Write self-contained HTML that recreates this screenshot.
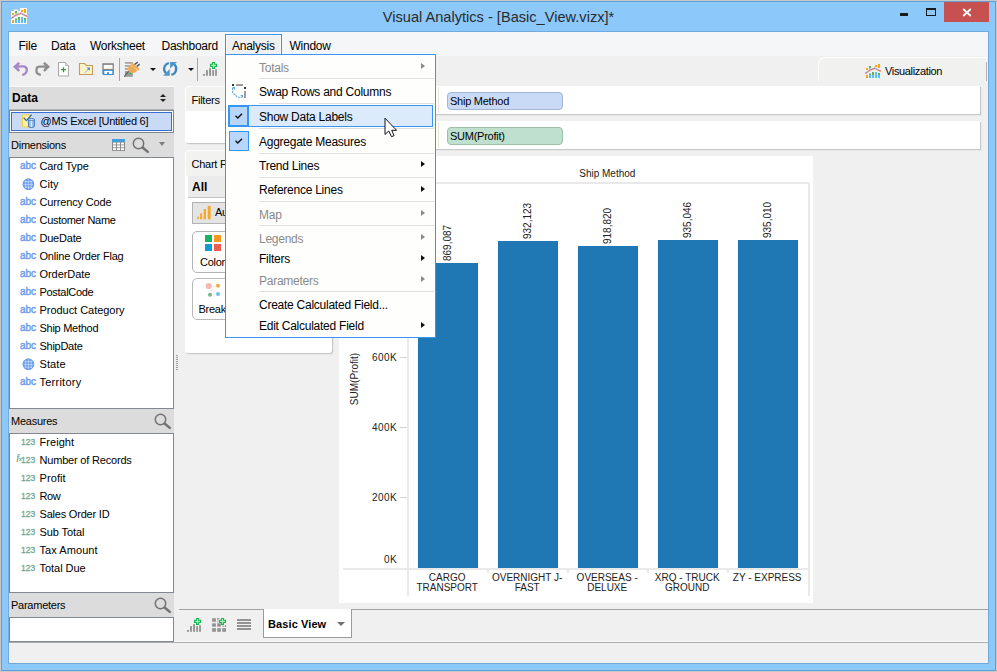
<!DOCTYPE html>
<html>
<head>
<meta charset="utf-8">
<title>Visual Analytics</title>
<style>
*{box-sizing:border-box;margin:0;padding:0}
html,body{width:997px;height:672px;overflow:hidden}
body{position:relative;background:#c9c9c9;font-family:"Liberation Sans",sans-serif;font-size:11px;color:#000}
.a{position:absolute}
.t{position:absolute;white-space:pre;line-height:14px;height:14px;letter-spacing:-0.25px}
.m{position:absolute;white-space:pre;font-size:12px;line-height:14px;height:14px;letter-spacing:-0.25px}
.c{position:absolute;white-space:pre;font-size:10px;line-height:10px;color:#222}
#f1{left:1px;top:1px;width:995px;height:670px;background:#629dd4}
#f2{left:2px;top:2px;width:993px;height:668px;background:#8dc8fb}
#f3{left:8px;top:31px;width:981px;height:633px;background:#71aade}
#cl{left:9px;top:32px;width:979px;height:631px;background:#f0f0f0;overflow:hidden}
.hd{background:#dcdcdc}
.lb{background:#fff;border:1px solid #828790}
.card{background:#fff;border-radius:5px 5px 3px 3px;box-shadow:1px 1px 0 #c8c8c8,2px 2px 0 #e8e8e8}
.sep{height:1px;background:#e2e2e2;left:34px;width:175px}
.dis{color:#8a8a8a}
.ic{color:#6f9fec;font-size:10px;letter-spacing:-0.1px;-webkit-text-stroke:0.45px #6f9fec}
.nm{color:#72a794;font-size:8.5px;letter-spacing:0;-webkit-text-stroke:0.3px #72a794}
.fx{color:#72a794;font-size:8.5px;font-style:italic;font-weight:700;font-family:"Liberation Serif",serif;letter-spacing:-0.6px}
.ar{width:0;height:0;border-left:4.4px solid #111;border-top:3.9px solid transparent;border-bottom:3.9px solid transparent}
.ar.g{border-left-color:#8a8a8a}
</style>
</head>
<body>
<div class="a" id="f1"></div>
<div class="a" id="f2"></div>

<!-- title bar -->
<svg class="a" style="left:11px;top:8px" width="16" height="16" viewBox="0 0 16 16">
<rect x="0" y="3" width="16" height="13" fill="#fbf8f1"/><rect x="3" y="1.5" width="4" height="3" fill="#fbf8f1"/><rect x="9" y="0" width="7" height="4" fill="#fbf8f1"/>
<rect x="1" y="5" width="2" height="2" fill="#f9a51a"/><rect x="4" y="3" width="2" height="2.5" fill="#64ae64"/><rect x="10" y="2" width="2" height="2" fill="#f9a51a"/><rect x="13" y="1" width="2" height="4" fill="#f9a51a"/>
<rect x="1" y="12" width="2" height="3" fill="#f9a51a"/><rect x="4" y="12" width="2" height="3" fill="#5bc0f8"/><rect x="7" y="12" width="2" height="3" fill="#5bc0f8"/><rect x="10" y="9" width="2" height="6" fill="#5bc0f8"/><rect x="13" y="12" width="2" height="3" fill="#5bc0f8"/>
<rect x="4" y="10.5" width="2" height="1.5" fill="#64ae64"/><rect x="7" y="9" width="2" height="3" fill="#64ae64"/><rect x="13" y="10" width="2" height="2" fill="#64ae64"/>
<path d="M0 10.5 L5 7.2 L10 5.2 L16 8.5" stroke="#a07ab8" stroke-width="1.4" fill="none"/><path d="M0 10.5 L5 7.2 L10 5.2 L16 8.5" stroke="#f4a07a" stroke-width="1.4" fill="none" stroke-dasharray="1.4 1.4"/>
</svg>
<div class="a" style="left:0;top:6.6px;width:997px;text-align:center;font-size:14.6px;line-height:20px;color:#2a2a2a;white-space:pre">Visual Analytics - [Basic_View.vizx]*</div>
<div class="a" style="left:900px;top:13px;width:8px;height:3px;background:#1a1a1a"></div>
<div class="a" style="left:926px;top:8px;width:10px;height:8px;border:1px solid #1a1a1a;border-top-width:2px"></div>
<div class="a" style="left:944px;top:2px;width:45px;height:20px;background:#c75050"></div>
<svg class="a" style="left:962px;top:8px" width="10" height="9" viewBox="0 0 10 9"><path d="M1.2 1 L8.8 8 M8.8 1 L1.2 8" stroke="#fff" stroke-width="1.7" fill="none"/></svg>

<div class="a" id="f3"></div>
<div class="a" id="cl">
<!-- coordinates inside #cl are offset by (-9,-32) -->
<div class="a" id="o" style="left:-9px;top:-32px;width:997px;height:672px">

<!-- menu bar -->
<div class="a" style="left:9px;top:32px;width:979px;height:24px;background:#f5f6f7"></div>
<div class="a" style="left:225px;top:34px;width:57px;height:21px;background:#f0f0f0;border:1px solid #3596f8;border-bottom:none;box-shadow:inset 1px 1px 0 #f8f8f8,inset -1px 0 0 #f8f8f8"></div>
<div class="m" style="left:18.5px;top:39px">File</div>
<div class="m" style="left:51px;top:39px">Data</div>
<div class="m" style="left:90px;top:39px">Worksheet</div>
<div class="m" style="left:161.5px;top:39px">Dashboard</div>
<div class="m" style="left:232px;top:39px">Analysis</div>
<div class="m" style="left:289.5px;top:39px">Window</div>

<!-- toolbar -->

<!-- undo -->
<svg class="a" style="left:12px;top:61px" width="17" height="16" viewBox="0 0 17 16"><path d="M1 5.8 L6.3 0.9 L8.1 2.5 L5.6 5.8 L8.1 9.5 L6.3 10.8 Z" fill="#a987c6"/><path d="M5 5.6 C9 5.2 14.8 4.4 14.8 8.9 C14.8 11.6 12.8 13.2 10.2 14" stroke="#a987c6" stroke-width="2.3" fill="none"/></svg>
<!-- redo -->
<svg class="a" style="left:34px;top:61px" width="17" height="16" viewBox="0 0 17 16"><path d="M16 5.8 L10.9 0.9 L9.1 2.5 L11.6 5.8 L9.1 9.5 L10.9 10.8 Z" fill="#8e8e8e"/><path d="M12 5.6 H5.6 C3.2 5.6 2.5 7 2.5 9 V10.6 C2.5 12.4 4 13.4 6.8 14" stroke="#8e8e8e" stroke-width="2.3" fill="none"/></svg>
<!-- new -->
<svg class="a" style="left:57px;top:62px" width="13" height="15" viewBox="0 0 13 15"><path d="M1.5 0.5 H8.5 L11.5 3.5 V14 H1.5 Z" fill="#fff" stroke="#a9a9a9"/><path d="M8.5 0.5 V3.5 H11.5" fill="#e6e6e6" stroke="#a9a9a9" stroke-width="0.8"/><path d="M6.5 5.2 V10.2 M4 7.7 H9" stroke="#2e9b3a" stroke-width="1.3"/></svg>
<!-- open -->
<svg class="a" style="left:78px;top:62px" width="16" height="14" viewBox="0 0 16 14"><path d="M1.5 1.5 H6.5 L8.5 3.5 H14.5 V12.5 H1.5 Z" fill="#fdf3c6" stroke="#c59a5c" stroke-width="1.1"/><path d="M7 10.5 L11 6.5" stroke="#3b8fd0" stroke-width="1" fill="none" stroke-dasharray="1.3 0.5"/><path d="M8.6 5.6 H11.9 V8.9 Z" fill="#3b8fd0"/></svg>
<!-- save -->
<svg class="a" style="left:101px;top:63px" width="14" height="13" viewBox="0 0 14 13"><rect x="1.3" y="0.2" width="11.6" height="7" fill="#858585"/><path d="M1.3 6.9 H12.9 V11.9 H2.3 L1.3 10.9 Z" fill="#3f8fcb"/><rect x="2.7" y="1.9" width="8.9" height="4" fill="#fbfbfb"/><rect x="3.3" y="7.9" width="8" height="3" fill="#fff"/><rect x="6" y="9.2" width="2" height="1.7" fill="#3f8fcb"/></svg>
<div class="a" style="left:119px;top:58px;width:1px;height:23px;background:#a5a5a5"></div>
<!-- plug -->
<svg class="a" style="left:124px;top:61px" width="17" height="17" viewBox="0 0 17 17"><g fill="#9c9c9c"><rect x="0.9" y="1.1" width="7.9" height="1.6"/><rect x="0.9" y="4.2" width="4.9" height="1.6"/><rect x="0.9" y="7.2" width="3.3" height="1.6"/><rect x="0.9" y="10.1" width="7.9" height="5.7"/></g><path d="M0.2 15.7 L4.8 10.2" stroke="#5a5e66" stroke-width="1.2"/><path d="M10.4 3.6 L13.7 1.1 M12.7 5.6 L15.6 3.1" stroke="#565a62" stroke-width="1.4"/><circle cx="8.2" cy="8" r="4.1" fill="#eeaa52"/><path d="M6 3.6 L13.4 9.8 L11 11.6 L4.6 6 Z" fill="#eeaa52"/><path d="M7.5 2.4 L14.5 8.2" stroke="#eeaa52" stroke-width="2" stroke-linecap="round"/><path d="M6.9 3.9 L13 9" stroke="#f7d3a0" stroke-width="0.7"/><rect x="5.9" y="11.8" width="1.3" height="1.3" fill="#1fc42e"/></svg>
<div class="a" style="left:150px;top:68px;width:0;height:0;border-left:3px solid transparent;border-right:3px solid transparent;border-top:3.5px solid #111"></div>
<!-- refresh -->
<svg class="a" style="left:162px;top:61px" width="17" height="16" viewBox="0 0 17 16"><g fill="none" stroke="#3c86be" stroke-width="2.2"><path d="M6.9 2 A6.05 6.05 0 0 0 4 12.3"/><path d="M9.3 13.75 A6.05 6.05 0 0 0 12.2 3.3"/></g><path d="M1.1 14.7 H7.8 V8.1 Z M15 1.1 H8.1 V7.5 Z" fill="#4f97cb"/></svg>
<div class="a" style="left:188px;top:68px;width:0;height:0;border-left:3px solid transparent;border-right:3px solid transparent;border-top:3.5px solid #111"></div>
<div class="a" style="left:197px;top:58px;width:1px;height:23px;background:#a5a5a5"></div>
<!-- add chart -->
<svg class="a" style="left:202px;top:61px" width="16" height="16" viewBox="0 0 16 16"><g fill="#939393"><rect x="1" y="12.9" width="1.9" height="1.9"/><rect x="4" y="9.1" width="1.9" height="5.7"/><rect x="7.1" y="7.2" width="1.9" height="7.6"/><rect x="10.2" y="9.1" width="1.8" height="5.7"/><rect x="13.1" y="8.3" width="1.8" height="6.5"/></g><path d="M11.55 0.9 V7.9 M8 4.4 H15.1" stroke="#12b450" stroke-width="3.1"/><path d="M11.55 2 V6.8 M9.1 4.4 H14" stroke="#a9f0b6" stroke-width="1.2"/></svg>


<!-- left panel -->
<div class="a hd" style="left:9px;top:86px;width:165px;height:24px;border-top:1px solid #fafafa;border-bottom:1px solid #b4b4b4"></div>
<div class="t" style="left:12px;top:91px;font-weight:700;font-size:12px;letter-spacing:0">Data</div>
<div class="a" style="left:160px;top:94px;width:0;height:0;border-left:3px solid transparent;border-right:3px solid transparent;border-bottom:3px solid #222"></div>
<div class="a" style="left:160px;top:99px;width:0;height:0;border-left:3px solid transparent;border-right:3px solid transparent;border-top:3px solid #222"></div>
<div class="a lb" style="left:9px;top:110px;width:165px;height:23px"></div>
<div class="a" style="left:11px;top:112px;width:161px;height:19px;background:#c8daf6;border:1px solid #3a6fd2"></div>
<svg class="a" style="left:22px;top:114px" width="13" height="14" viewBox="0 0 13 14"><rect x="0.5" y="0.8" width="7.5" height="12.2" rx="0.8" fill="#fdf3a8" stroke="#f5cf3e" stroke-width="1"/><path d="M1.6 3.6 L4.4 6.6 L9.6 0.6" stroke="#2f62b4" stroke-width="1.3" fill="none"/><path d="M6.4 5.4 C6.4 4.2 12.4 4.2 12.4 5.4 V12.4 C12.4 13.8 6.4 13.8 6.4 12.4 Z" fill="#8eb4e4" stroke="#3d72bc" stroke-width="0.9"/><ellipse cx="9.4" cy="5.5" rx="3" ry="1" fill="#cfe0f6" stroke="#3d72bc" stroke-width="0.7"/><rect x="8.6" y="7" width="1.6" height="5.8" fill="#dce9f8"/></svg>
<div class="t" style="left:40.5px;top:114px">@MS Excel [Untitled 6]</div>

<div class="a hd" style="left:9px;top:133px;width:165px;height:24px"></div>
<svg class="a" style="left:112px;top:139px" width="13" height="12" viewBox="0 0 13 12"><rect x="0" y="0" width="13" height="12" fill="#8c8c8c"/><rect x="0" y="0" width="13" height="3" fill="#3f9edc"/><g fill="#fff"><rect x="1" y="3.6" width="3" height="1.9"/><rect x="5" y="3.6" width="3" height="1.9"/><rect x="9" y="3.6" width="3" height="1.9"/><rect x="1" y="6.4" width="3" height="1.9"/><rect x="5" y="6.4" width="3" height="1.9"/><rect x="9" y="6.4" width="3" height="1.9"/><rect x="1" y="9.2" width="3" height="1.9"/><rect x="5" y="9.2" width="3" height="1.9"/><rect x="9" y="9.2" width="3" height="1.9"/></g></svg>
<svg class="a" style="left:132px;top:137px" width="18" height="17" viewBox="0 0 18 17"><circle cx="6.5" cy="6.5" r="5.2" fill="none" stroke="#727272" stroke-width="1.5"/><path d="M10.6 10.5 L15.8 14.9" stroke="#727272" stroke-width="2.4" stroke-linecap="round"/></svg>
<div class="a" style="left:158.6px;top:142px;width:0;height:0;border-left:3.8px solid transparent;border-right:3.8px solid transparent;border-top:4.2px solid #7c7c7c"></div>
<div class="t" style="left:11px;top:138px">Dimensions</div>
<div class="a lb" style="left:9px;top:157px;width:165px;height:252px"></div>
<div class="t ic" style="left:20px;top:159px">abc</div>
<div class="t" style="left:39.5px;top:159px;letter-spacing:-0.16px">Card Type</div>
<svg class="a" style="left:22px;top:177.6px" width="13" height="13" viewBox="0 0 13 13"><circle cx="6.4" cy="6.3" r="5.7" fill="#6a9df0"/><g stroke="#d3e3fb" stroke-width="0.65" fill="none"><path d="M0.5 6.4H12.3M1.5 3.6H11.3M1.5 9.2H11.3M6.4 0.5V12.3M3.6 1.4V11.4M9.2 1.4V11.4"/></g><circle cx="6.4" cy="6.3" r="5.3" fill="none" stroke="#6a9df0" stroke-width="1"/></svg>
<div class="t" style="left:39.5px;top:177px;letter-spacing:0.01px">City</div>
<div class="t ic" style="left:20px;top:195px">abc</div>
<div class="t" style="left:39.5px;top:195px;letter-spacing:-0.15px">Currency Code</div>
<div class="t ic" style="left:20px;top:213px">abc</div>
<div class="t" style="left:39.5px;top:213px;letter-spacing:-0.31px">Customer Name</div>
<div class="t ic" style="left:20px;top:231px">abc</div>
<div class="t" style="left:39.5px;top:231px;letter-spacing:-0.22px">DueDate</div>
<div class="t ic" style="left:20px;top:249px">abc</div>
<div class="t" style="left:39.5px;top:249px;letter-spacing:-0.20px">Online Order Flag</div>
<div class="t ic" style="left:20px;top:267px">abc</div>
<div class="t" style="left:39.5px;top:267px;letter-spacing:-0.07px">OrderDate</div>
<div class="t ic" style="left:20px;top:285px">abc</div>
<div class="t" style="left:39.5px;top:285px;letter-spacing:-0.30px">PostalCode</div>
<div class="t ic" style="left:20px;top:303px">abc</div>
<div class="t" style="left:39.5px;top:303px;letter-spacing:-0.04px">Product Category</div>
<div class="t ic" style="left:20px;top:321px">abc</div>
<div class="t" style="left:39.5px;top:321px;letter-spacing:-0.27px">Ship Method</div>
<div class="t ic" style="left:20px;top:339px">abc</div>
<div class="t" style="left:39.5px;top:339px;letter-spacing:-0.27px">ShipDate</div>
<svg class="a" style="left:22px;top:357.6px" width="13" height="13" viewBox="0 0 13 13"><circle cx="6.4" cy="6.3" r="5.7" fill="#6a9df0"/><g stroke="#d3e3fb" stroke-width="0.65" fill="none"><path d="M0.5 6.4H12.3M1.5 3.6H11.3M1.5 9.2H11.3M6.4 0.5V12.3M3.6 1.4V11.4M9.2 1.4V11.4"/></g><circle cx="6.4" cy="6.3" r="5.3" fill="none" stroke="#6a9df0" stroke-width="1"/></svg>
<div class="t" style="left:39.5px;top:357px;letter-spacing:0.10px">State</div>
<div class="t ic" style="left:20px;top:375px">abc</div>
<div class="t" style="left:39.5px;top:375px;letter-spacing:0.24px">Territory</div>

<div class="a hd" style="left:9px;top:409px;width:165px;height:24px"></div>
<svg class="a" style="left:154px;top:413px" width="18" height="17" viewBox="0 0 18 17"><circle cx="6.5" cy="6.5" r="5.2" fill="none" stroke="#727272" stroke-width="1.5"/><path d="M10.6 10.5 L15.8 14.9" stroke="#727272" stroke-width="2.4" stroke-linecap="round"/></svg>
<div class="t" style="left:11px;top:414px">Measures</div>
<div class="a lb" style="left:9px;top:433px;width:165px;height:160px"></div>
<div class="t nm" style="left:21px;top:435px">123</div>
<div class="t" style="left:39.5px;top:435px;letter-spacing:0.06px">Freight</div>
<div class="t fx" style="left:16.5px;top:450px">f<span style="font-size:6px;font-style:normal;font-family:'Liberation Sans',sans-serif;position:relative;top:1px">x</span></div>
<div class="t nm" style="left:21px;top:453px">123</div>
<div class="t" style="left:39.5px;top:453px;letter-spacing:-0.19px">Number of Records</div>
<div class="t nm" style="left:21px;top:471px">123</div>
<div class="t" style="left:39.5px;top:471px;letter-spacing:0.09px">Profit</div>
<div class="t nm" style="left:21px;top:489px">123</div>
<div class="t" style="left:39.5px;top:489px;letter-spacing:-0.45px">Row</div>
<div class="t nm" style="left:21px;top:507px">123</div>
<div class="t" style="left:39.5px;top:507px;letter-spacing:-0.20px">Sales Order ID</div>
<div class="t nm" style="left:21px;top:525px">123</div>
<div class="t" style="left:39.5px;top:525px;letter-spacing:-0.10px">Sub Total</div>
<div class="t nm" style="left:21px;top:543px">123</div>
<div class="t" style="left:39.5px;top:543px;letter-spacing:0.07px">Tax Amount</div>
<div class="t nm" style="left:21px;top:561px">123</div>
<div class="t" style="left:39.5px;top:561px;letter-spacing:-0.04px">Total Due</div>

<div class="a hd" style="left:9px;top:593px;width:165px;height:24px"></div>
<svg class="a" style="left:154px;top:597px" width="18" height="17" viewBox="0 0 18 17"><circle cx="6.5" cy="6.5" r="5.2" fill="none" stroke="#727272" stroke-width="1.5"/><path d="M10.6 10.5 L15.8 14.9" stroke="#727272" stroke-width="2.4" stroke-linecap="round"/></svg>
<div class="t" style="left:11px;top:598px">Parameters</div>
<div class="a lb" style="left:9px;top:617px;width:165px;height:25px"></div>


<!-- Visualization tab -->
<div class="a" style="left:818px;top:57px;width:170px;height:24px;background:#f1f1ef;border-top:1.5px solid #fff;border-left:1.5px solid #fff;border-top-left-radius:7px"></div>
<div class="a" style="left:986px;top:62px;width:1px;height:19px;background:#b4b4b4"></div>
<svg class="a" style="left:865px;top:63px" width="16" height="16" viewBox="0 0 16 16">
<rect x="1" y="5" width="2" height="2" fill="#f9a51a"/><rect x="4" y="3" width="2" height="2.5" fill="#64ae64"/><rect x="10" y="2" width="2" height="2" fill="#f9a51a"/><rect x="13" y="1" width="2" height="4" fill="#f9a51a"/>
<rect x="1" y="12" width="2" height="3" fill="#f9a51a"/><rect x="4" y="12" width="2" height="3" fill="#5bc0f8"/><rect x="7" y="12" width="2" height="3" fill="#5bc0f8"/><rect x="10" y="9" width="2" height="6" fill="#5bc0f8"/><rect x="13" y="12" width="2" height="3" fill="#5bc0f8"/>
<rect x="4" y="10.5" width="2" height="1.5" fill="#64ae64"/><rect x="7" y="9" width="2" height="3" fill="#64ae64"/><rect x="13" y="10" width="2" height="2" fill="#64ae64"/>
<path d="M0 10.5 L5 7.2 L10 5.2 L16 8.5" stroke="#a07ab8" stroke-width="1.3" fill="none"/><path d="M0 10.5 L5 7.2 L10 5.2 L16 8.5" stroke="#f4a07a" stroke-width="1.3" fill="none" stroke-dasharray="1.4 1.4"/>
</svg>
<div class="t" style="left:885px;top:64px;letter-spacing:-0.35px">Visualization</div>

<!-- Filters card -->
<div class="a card" style="left:185px;top:86px;width:147px;height:57px"></div>
<div class="a" style="left:185px;top:86px;width:147px;height:25px;background:#f2f2f0;border-radius:5px 5px 0 0;border-top:1px solid #fdfdfd;border-left:1px solid #fdfdfd"></div>
<div class="t" style="left:191.5px;top:93px">Filters</div>

<!-- Chart panel card -->
<div class="a card" style="left:185px;top:150px;width:147px;height:203px"></div>
<div class="a" style="left:185px;top:150px;width:147px;height:26px;background:#f2f2f0;border-radius:5px 5px 0 0;border-top:1px solid #fdfdfd;border-left:1px solid #fdfdfd"></div>
<div class="t" style="left:191.5px;top:157px">Chart Panel</div>
<div class="a" style="left:188px;top:176px;width:144px;height:22px;background:#ebebeb;border-bottom:1px solid #c4c4c4"></div>
<div class="t" style="left:192px;top:180px;font-weight:700;font-size:12px;letter-spacing:0">All</div>
<div class="a" style="left:192px;top:202px;width:133px;height:22px;background:#e4e4e4;border:1px solid #b2b2b2"></div>
<svg class="a" style="left:197px;top:205px" width="15" height="16" viewBox="0 0 15 16"><g fill="#f9a726"><rect x="0.2" y="11.6" width="1.6" height="2.7"/><rect x="3.1" y="8.3" width="2" height="6"/><rect x="6.7" y="4" width="2.3" height="10.3"/><rect x="10.8" y="0.9" width="2.8" height="13.4"/></g></svg>
<div class="t" style="left:215px;top:205px">Automatic</div>
<div class="a" style="left:192px;top:231px;width:42px;height:42px;background:#fff;border:1px solid #b4b4b4;border-radius:5px"></div>
<div class="a" style="left:205px;top:235px;width:7px;height:7px;background:#18b364"></div>
<div class="a" style="left:214px;top:235px;width:7px;height:7px;background:#f7981d"></div>
<div class="a" style="left:205px;top:244px;width:7px;height:7px;background:#0d9bd1"></div>
<div class="a" style="left:214px;top:244px;width:7px;height:7px;background:#ee5b4f"></div>
<div class="t" style="left:200px;top:255px">Color</div>
<div class="a" style="left:192px;top:278px;width:42px;height:42px;background:#fff;border:1px solid #b9b9b9;border-radius:5px"></div>
<svg class="a" style="left:204px;top:281px" width="18" height="18" viewBox="0 0 18 18"><circle cx="4.8" cy="5" r="3.1" fill="#f6bab2"/><circle cx="14" cy="4.7" r="1.9" fill="#f7a13a"/><circle cx="6" cy="13.7" r="2" fill="#74b87e"/><circle cx="14" cy="13" r="2" fill="#6cc0f6"/><path d="M9 5.4 H11.6 M8.4 8.4 L10.6 10.6 M7.4 9 L6.8 11" stroke="#c8c8c8" stroke-width="0.8" stroke-dasharray="1 1"/></svg>
<div class="t" style="left:198.5px;top:302px">Break</div>
<!-- splitter grip -->
<div class="a" style="left:176px;top:355px;width:2px;height:16px;background:repeating-linear-gradient(#9c9c9c 0 1px,transparent 1px 2px)"></div>

<!-- shelves -->
<div class="a" style="left:338px;top:86px;width:642px;height:28px;background:#fff;box-shadow:1px 1px 0 #c8c8c8,2px 2px 0 #e8e8e8;border-radius:3px 0 0 3px"></div>
<div class="a" style="left:338px;top:121px;width:642px;height:28px;background:#fff;box-shadow:1px 1px 0 #c8c8c8,2px 2px 0 #e8e8e8;border-radius:3px 0 0 3px"></div>
<div class="a" style="left:438px;top:87px;width:1px;height:26px;background:#ece6d6"></div>
<div class="a" style="left:438px;top:122px;width:1px;height:26px;background:#ece6d6"></div>
<div class="a" style="left:447px;top:92px;width:116px;height:18px;background:#c9daf6;border:1px solid #a4b6d6;border-radius:4px"></div>
<div class="t" style="left:450px;top:94px">Ship Method</div>
<div class="a" style="left:447px;top:127px;width:116px;height:18px;background:#bfe0cf;border:1px solid #9dc0ab;border-radius:4px"></div>
<div class="t" style="left:450px;top:129px">SUM(Profit)</div>

<div class="a" style="left:339px;top:156px;width:474px;height:447px;background:#fff"></div>
<div class="c" style="left:407.3px;top:169px;width:400px;text-align:center">Ship Method</div>
<div class="a" style="left:408px;top:182px;width:401px;height:1.5px;background:#e9e9e9"></div>
<div class="a" style="left:808px;top:183px;width:1.5px;height:413px;background:#e9e9e9"></div>
<div class="a" style="left:407px;top:183px;width:1.5px;height:413px;background:#e9e9e9"></div>
<div class="a" style="left:343px;top:568px;width:466px;height:1.5px;background:#e9e9e9"></div>
<div class="a" style="left:487px;top:568px;width:1.5px;height:5px;background:#e9e9e9"></div>
<div class="a" style="left:567px;top:568px;width:1.5px;height:5px;background:#e9e9e9"></div>
<div class="a" style="left:647px;top:568px;width:1.5px;height:5px;background:#e9e9e9"></div>
<div class="a" style="left:727px;top:568px;width:1.5px;height:5px;background:#e9e9e9"></div>
<div class="a" style="left:400px;top:357px;width:7px;height:1px;background:#d4d4d4"></div>
<div class="c" style="left:356px;top:352.5px;width:41px;text-align:right;letter-spacing:0.4px">600K</div>
<div class="a" style="left:400px;top:427px;width:7px;height:1px;background:#d4d4d4"></div>
<div class="c" style="left:356px;top:422.5px;width:41px;text-align:right;letter-spacing:0.4px">400K</div>
<div class="a" style="left:400px;top:497px;width:7px;height:1px;background:#d4d4d4"></div>
<div class="c" style="left:356px;top:492.5px;width:41px;text-align:right;letter-spacing:0.4px">200K</div>
<div class="c" style="left:356px;top:555px;width:41px;text-align:right;letter-spacing:0.4px">0K</div>
<div class="c" style="left:324.5px;top:373.5px;width:60px;text-align:center;transform:rotate(-90deg)">SUM(Profit)</div>
<div class="a" style="left:418px;top:263px;width:60px;height:305px;background:#1f77b4"></div>
<div class="c" style="left:423px;top:238px;width:50px;text-align:left;transform:rotate(-90deg);transform-origin:25px 5px"><span style="display:inline-block;width:50px;text-align:left;padding-left:7px">869,087</span></div>
<div class="c" style="left:407.2px;top:573px;width:80px;text-align:center">CARGO</div>
<div class="c" style="left:407.2px;top:583px;width:80px;text-align:center">TRANSPORT</div>
<div class="a" style="left:498px;top:241px;width:60px;height:327px;background:#1f77b4"></div>
<div class="c" style="left:503px;top:216px;width:50px;text-align:left;transform:rotate(-90deg);transform-origin:25px 5px"><span style="display:inline-block;width:50px;text-align:left;padding-left:7px">932,123</span></div>
<div class="c" style="left:487.2px;top:573px;width:80px;text-align:center">OVERNIGHT J-</div>
<div class="c" style="left:487.2px;top:583px;width:80px;text-align:center">FAST</div>
<div class="a" style="left:578px;top:245.5px;width:60px;height:322.5px;background:#1f77b4"></div>
<div class="c" style="left:583px;top:221px;width:50px;text-align:left;transform:rotate(-90deg);transform-origin:25px 5px"><span style="display:inline-block;width:50px;text-align:left;padding-left:7px">918,820</span></div>
<div class="c" style="left:567.2px;top:573px;width:80px;text-align:center">OVERSEAS -</div>
<div class="c" style="left:567.2px;top:583px;width:80px;text-align:center">DELUXE</div>
<div class="a" style="left:658px;top:240px;width:60px;height:328px;background:#1f77b4"></div>
<div class="c" style="left:663px;top:215px;width:50px;text-align:left;transform:rotate(-90deg);transform-origin:25px 5px"><span style="display:inline-block;width:50px;text-align:left;padding-left:7px">935,046</span></div>
<div class="c" style="left:647.2px;top:573px;width:80px;text-align:center">XRQ - TRUCK</div>
<div class="c" style="left:647.2px;top:583px;width:80px;text-align:center">GROUND</div>
<div class="a" style="left:738px;top:240px;width:60px;height:328px;background:#1f77b4"></div>
<div class="c" style="left:743px;top:215px;width:50px;text-align:left;transform:rotate(-90deg);transform-origin:25px 5px"><span style="display:inline-block;width:50px;text-align:left;padding-left:7px">935,010</span></div>
<div class="c" style="left:727.2px;top:573px;width:80px;text-align:center">ZY - EXPRESS</div>

<div class="a" style="left:179px;top:609px;width:809px;height:1px;background:#a2a2a2"></div>
<div class="a" style="left:174px;top:641px;width:814px;height:1px;background:#fafafa"></div>
<div class="a" style="left:9px;top:642px;width:979px;height:1px;background:#adadad"></div>
<div class="a" style="left:263px;top:609px;width:89px;height:29px;background:#fff;border:1px solid #9a9a9a;border-top:none"></div>
<div class="t" style="left:268px;top:617px;font-weight:700;font-size:11px;letter-spacing:0.1px">Basic View</div>
<div class="a" style="left:337px;top:622px;width:0;height:0;border-left:4px solid transparent;border-right:4px solid transparent;border-top:4.5px solid #707070"></div>
<svg class="a" style="left:186px;top:617px" width="16" height="16" viewBox="0 0 16 16"><g fill="#939393"><rect x="1" y="12.9" width="1.9" height="1.9"/><rect x="4" y="9.1" width="1.9" height="5.7"/><rect x="7.1" y="7.2" width="1.9" height="7.6"/><rect x="10.2" y="9.1" width="1.8" height="5.7"/><rect x="13.1" y="8.3" width="1.8" height="6.5"/></g><path d="M11.55 0.9 V7.9 M8 4.4 H15.1" stroke="#12b450" stroke-width="3.1"/><path d="M11.55 2 V6.8 M9.1 4.4 H14" stroke="#a9f0b6" stroke-width="1.2"/></svg>
<svg class="a" style="left:212px;top:617px" width="16" height="16" viewBox="0 0 16 16"><g fill="#939393"><rect x="0.1" y="1.2" width="3.8" height="3.6"/><rect x="0.1" y="6.3" width="3.8" height="3.4"/><rect x="0.1" y="11.1" width="3.8" height="3.7"/><rect x="5.2" y="6.3" width="3.7" height="3.4"/><rect x="5.2" y="11.1" width="3.7" height="3.7"/><rect x="10.2" y="11.1" width="3.8" height="3.7"/></g><path d="M5.7 1.2 V6.3 M5.7 1.6 H8 M10.2 9.2 H14 M13.6 8 V9.6" stroke="#8a8a8a" stroke-width="0.9" fill="none" stroke-dasharray="1.6 0.8"/><path d="M10.5 0.9 V7.9 M6.95 4.4 H14.05" stroke="#12b450" stroke-width="3.1"/><path d="M10.5 2 V6.8 M8.05 4.4 H12.95" stroke="#a9f0b6" stroke-width="1.2"/></svg>
<div class="a" style="left:237px;top:619px;width:14px;height:11px;background:repeating-linear-gradient(#929292 0 1.8px,transparent 1.8px 3.05px)"></div>

<div class="a" style="left:225px;top:54px;width:211px;height:284px;background:#fefefd;border:1px solid #3596f8"></div>
<div class="a" style="left:259px;top:78px;width:175px;height:1px;background:#e0e0e0"></div>
<div class="a" style="left:259px;top:103px;width:175px;height:1px;background:#e0e0e0"></div>
<div class="a" style="left:259px;top:128px;width:175px;height:1px;background:#e0e0e0"></div>
<div class="a" style="left:259px;top:153px;width:175px;height:1px;background:#e0e0e0"></div>
<div class="a" style="left:259px;top:177px;width:175px;height:1px;background:#e0e0e0"></div>
<div class="a" style="left:259px;top:201px;width:175px;height:1px;background:#e0e0e0"></div>
<div class="a" style="left:259px;top:225px;width:175px;height:1px;background:#e0e0e0"></div>
<div class="a" style="left:259px;top:291px;width:175px;height:1px;background:#e0e0e0"></div>
<div class="a" style="left:228px;top:105px;width:205px;height:22px;background:#dcebfc;border:1px solid #3596f8"></div>
<div class="a" style="left:228px;top:105px;width:21px;height:22px;background:#b8d6fb;border:2px solid #3596f8"></div>
<div class="a" style="left:229px;top:131px;width:20px;height:20px;background:#b8d6fb;border:1px solid #3596f8"></div>
<svg class="a" style="left:234px;top:112px" width="10" height="9" viewBox="0 0 10 9"><path d="M1.5 3.7 L3.8 6 L8 1.7" stroke="#111" stroke-width="1.4" fill="none"/></svg>
<svg class="a" style="left:234px;top:137px" width="10" height="9" viewBox="0 0 10 9"><path d="M1.5 3.7 L3.8 6 L8 1.7" stroke="#111" stroke-width="1.4" fill="none"/></svg>
<svg class="a" style="left:231px;top:83px" width="17" height="16" viewBox="0 0 17 16"><rect x="1" y="1" width="2" height="2" fill="#3a3a3a"/><rect x="5" y="1" width="7" height="2" fill="#9c9c9c"/><rect x="13" y="4" width="2" height="2" fill="#3a3a3a"/><rect x="13" y="8" width="2" height="7" fill="#9c9c9c"/><path d="M1.6 5 V9.6 L6.4 14.2 H11" stroke="#5dabe2" stroke-width="1.1" fill="none" stroke-dasharray="2.2 0.7"/><path d="M1 4 H4.1 V7 Z M9.2 11.9 H12 V14.9 Z" fill="#5dabe2"/></svg>
<div class="m dis" style="left:259px;top:61px">Totals</div>
<div class="a ar g" style="left:421px;top:62.7px"></div>
<div class="m" style="left:259px;top:85px">Swap Rows and Columns</div>
<div class="m" style="left:259px;top:110px">Show Data Labels</div>
<div class="m" style="left:259px;top:135px">Aggregate Measures</div>
<div class="m" style="left:259px;top:159px">Trend Lines</div>
<div class="a ar" style="left:421px;top:161.3px"></div>
<div class="m" style="left:259px;top:183px">Reference Lines</div>
<div class="a ar" style="left:421px;top:185.8px"></div>
<div class="m dis" style="left:259px;top:208px">Map</div>
<div class="a ar g" style="left:421px;top:209.9px"></div>
<div class="m dis" style="left:259px;top:231.5px">Legends</div>
<div class="a ar g" style="left:421px;top:234.1px"></div>
<div class="m" style="left:259px;top:251.5px">Filters</div>
<div class="a ar" style="left:421px;top:254.8px"></div>
<div class="m dis" style="left:259px;top:273.5px">Parameters</div>
<div class="a ar g" style="left:421px;top:276px"></div>
<div class="m" style="left:259px;top:297.5px">Create Calculated Field...</div>
<div class="m" style="left:259px;top:318.5px">Edit Calculated Field</div>
<div class="a ar" style="left:421px;top:321.8px"></div>
<svg class="a" style="left:383.5px;top:117px" width="14" height="22" viewBox="0 0 14 22"><path d="M1 1.2 V17.4 L4.8 14 L7.5 19.7 L10.1 18.6 L7.7 13.3 H12.6 Z" fill="#fff" stroke="#101018" stroke-width="1"/></svg>

</div>
</div>
</body>
</html>
